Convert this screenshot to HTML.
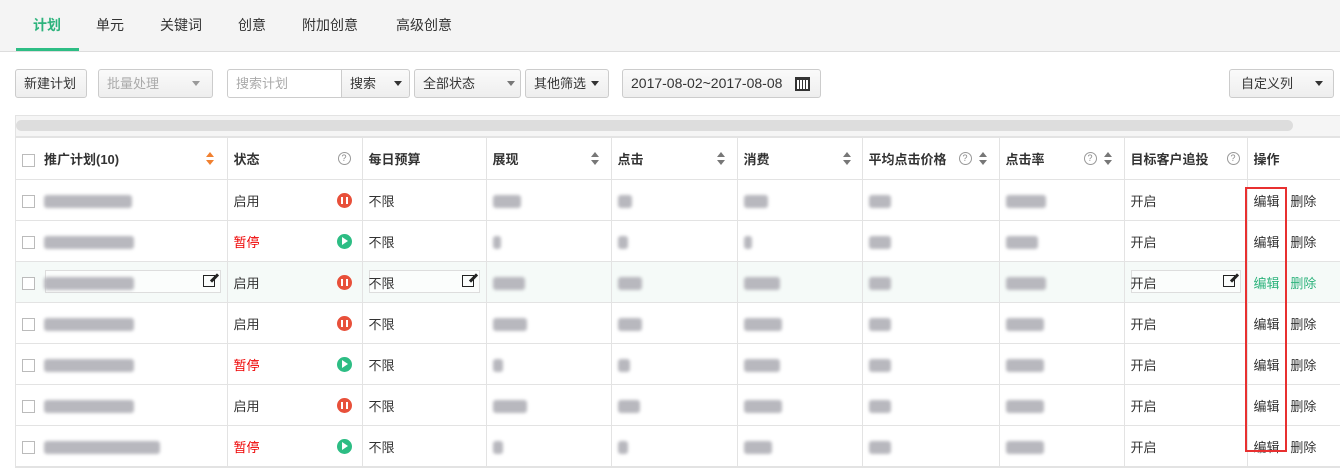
<!DOCTYPE html>
<html><head><meta charset="utf-8"><style>
*{box-sizing:border-box;margin:0;padding:0}
body{width:1340px;height:459px;overflow:hidden;background:#fff;font-family:"Liberation Sans","Noto Sans CJK SC",sans-serif;font-size:13px;color:#333;position:relative}
.tabs{position:absolute;left:0;top:0;width:1340px;height:52px;background:#f4f4f4;border-bottom:1px solid #ddd}
.tab{position:absolute;top:15px;font-size:14px;color:#333}
.tab.on{color:#2db37c;font-weight:bold}
.ul{position:absolute;left:16px;top:48px;width:63px;height:3px;background:#2dbd84}
.btn{position:absolute;top:69px;height:29px;border:1px solid #ccc;border-radius:3px;background:linear-gradient(#fafafa,#eee);font-size:13px;line-height:27px;padding-left:8px;color:#333}
.tri{position:absolute;top:11px;width:0;height:0;border-left:4px solid transparent;border-right:4px solid transparent;border-top:5px solid #333}
.tbl{position:absolute;left:15px;top:115px;width:1325px;border:1px solid #e3e3e3;border-right:none}
.scroll{height:21px;background:#f5f5f5;padding:4px 0 0 0;border-bottom:1px solid #e3e3e3}
.scroll div{height:11px;width:1277px;background:#ddd;border-radius:6px}
table{border-collapse:collapse;table-layout:fixed;width:1324px}
td,th{border:1px solid #e3e3e3;height:41px;padding:0 6px;text-align:left;position:relative;font-size:13px}
th{height:42px;font-weight:bold;background:#fff}
tr td:first-child,tr th:first-child{border-left:none}
.cb{display:inline-block;width:13px;height:13px;border:1px solid #bbb;vertical-align:middle;margin-right:9px;background:#fff}
.q{position:absolute;top:14px;width:13px;height:13px;border:1px solid #999;border-radius:50%;font-size:9px;line-height:11px;text-align:center;color:#888;font-weight:normal}
.s{position:absolute;top:14px;width:8px;height:14px}
.s:before{content:"";position:absolute;top:0;left:0;border-left:4px solid transparent;border-right:4px solid transparent;border-bottom:5px solid #777}
.s:after{content:"";position:absolute;top:8px;left:0;border-left:4px solid transparent;border-right:4px solid transparent;border-top:5px solid #777}
.s.o:before{border-bottom-color:#f08030}.s.o:after{border-top-color:#f08030}
.b{display:inline-block;height:13px;background:#b8b8be;filter:blur(1.5px);vertical-align:middle;border-radius:3px}
.ic{position:absolute;right:10px;top:13px;width:15px;height:15px;border-radius:50%}
.pa{background:#e8503a}.pa:before,.pa:after{content:"";position:absolute;top:4px;width:2px;height:7px;background:#fff}.pa:before{left:4px}.pa:after{left:9px}
.pl{background:#2dbd84}.pl:before{content:"";position:absolute;left:5px;top:3px;border-top:4.5px solid transparent;border-bottom:4.5px solid transparent;border-left:6px solid #fff}
.red{color:#e00}
.hl td{background:#f5faf8}
.ed{position:absolute;left:6px;right:6px;top:8px;height:23px;border:1px solid #ddd;background:#fbfdfc}
.pen{position:absolute;right:5px;top:4px;width:12px;height:12px;border:1.5px solid #222}
.pen:after{content:"";position:absolute;right:-2px;top:-3px;width:3px;height:10px;background:#222;transform:rotate(45deg)}
.rb{position:absolute;left:1245px;top:187px;width:42px;height:265px;border:2px solid #e83030}
</style></head><body>
<div class="tabs">
<span class="tab on" style="left:33px">计划</span>
<span class="tab" style="left:96px">单元</span>
<span class="tab" style="left:160px">关键词</span>
<span class="tab" style="left:238px">创意</span>
<span class="tab" style="left:302px">附加创意</span>
<span class="tab" style="left:396px">高级创意</span>
<div class="ul"></div>
</div>
<div class="btn" style="left:15px;width:72px">新建计划</div>
<div class="btn" style="left:98px;width:115px;color:#aaa">批量处理<span class="tri" style="left:93px;border-top-color:#999"></span></div>
<div class="btn" style="left:227px;width:115px;background:#fff;color:#aaa;border-radius:3px 0 0 3px">搜索计划</div>
<div class="btn" style="left:341px;width:69px;border-radius:0 3px 3px 0">搜索<span class="tri" style="left:52px"></span></div>
<div class="btn" style="left:414px;width:107px">全部状态<span class="tri" style="left:92px;border-top-color:#777"></span></div>
<div class="btn" style="left:525px;width:84px">其他筛选<span class="tri" style="left:65px"></span></div>
<div class="btn" style="left:622px;width:199px;font-size:14px">2017-08-02~2017-08-08<span style="position:absolute;left:172px;top:7px;width:15px;height:14px;border:2px solid #333;border-top-width:3px;background:repeating-linear-gradient(90deg,#fff 0 2px,#333 2px 3px)"></span></div>
<div class="btn" style="left:1229px;width:105px;padding-left:11px">自定义列<span class="tri" style="left:85px"></span></div>

<div class="tbl">
<div class="scroll"><div></div></div>
<table>
<colgroup><col style="width:211px"><col style="width:135px"><col style="width:124px"><col style="width:125px"><col style="width:126px"><col style="width:125px"><col style="width:137px"><col style="width:125px"><col style="width:123px"><col style="width:93px"></colgroup>
<tr><th><span class="cb"></span>推广计划(10)<span class="s o" style="left:190px"></span></th><th>状态<span class="q" style="left:110px">?</span></th><th>每日预算</th><th>展现<span class="s" style="left:104px"></span></th><th>点击<span class="s" style="left:105px"></span></th><th>消费<span class="s" style="left:105px"></span></th><th>平均点击价格<span class="q" style="left:96px">?</span><span class="s" style="left:116px"></span></th><th>点击率<span class="q" style="left:84px">?</span><span class="s" style="left:104px"></span></th><th>目标客户追投<span class="q" style="left:102px">?</span></th><th>操作</th></tr>
<tr><td><span class="cb"></span><span class="b" style="width:88px"></span></td><td>启用<span class="ic pa"></span></td><td>不限</td><td><span class="b" style="width:28px"></span></td><td><span class="b" style="width:14px"></span></td><td><span class="b" style="width:24px"></span></td><td><span class="b" style="width:22px"></span></td><td><span class="b" style="width:40px"></span></td><td>开启</td><td>编辑 &nbsp; 删除</td></tr>
<tr><td><span class="cb"></span><span class="b" style="width:90px"></span></td><td class="red">暂停<span class="ic pl"></span></td><td>不限</td><td><span class="b" style="width:8px"></span></td><td><span class="b" style="width:10px"></span></td><td><span class="b" style="width:8px"></span></td><td><span class="b" style="width:22px"></span></td><td><span class="b" style="width:32px"></span></td><td>开启</td><td>编辑 &nbsp; 删除</td></tr>
<tr class="hl"><td><span class="cb"></span><div class="ed" style="left:29px"><span class="pen"></span></div><span class="b" style="width:90px;position:relative"></span></td><td>启用<span class="ic pa"></span></td><td><div class="ed"><span class="pen"></span></div><span style="position:relative">不限</span></td><td><span class="b" style="width:32px"></span></td><td><span class="b" style="width:24px"></span></td><td><span class="b" style="width:36px"></span></td><td><span class="b" style="width:22px"></span></td><td><span class="b" style="width:40px"></span></td><td><div class="ed"><span class="pen"></span></div><span style="position:relative">开启</span></td><td style="color:#2db37c">编辑 &nbsp; 删除</td></tr>
<tr><td><span class="cb"></span><span class="b" style="width:90px"></span></td><td>启用<span class="ic pa"></span></td><td>不限</td><td><span class="b" style="width:34px"></span></td><td><span class="b" style="width:24px"></span></td><td><span class="b" style="width:38px"></span></td><td><span class="b" style="width:22px"></span></td><td><span class="b" style="width:38px"></span></td><td>开启</td><td>编辑 &nbsp; 删除</td></tr>
<tr><td><span class="cb"></span><span class="b" style="width:90px"></span></td><td class="red">暂停<span class="ic pl"></span></td><td>不限</td><td><span class="b" style="width:10px"></span></td><td><span class="b" style="width:12px"></span></td><td><span class="b" style="width:36px"></span></td><td><span class="b" style="width:22px"></span></td><td><span class="b" style="width:38px"></span></td><td>开启</td><td>编辑 &nbsp; 删除</td></tr>
<tr><td><span class="cb"></span><span class="b" style="width:90px"></span></td><td>启用<span class="ic pa"></span></td><td>不限</td><td><span class="b" style="width:34px"></span></td><td><span class="b" style="width:22px"></span></td><td><span class="b" style="width:38px"></span></td><td><span class="b" style="width:22px"></span></td><td><span class="b" style="width:38px"></span></td><td>开启</td><td>编辑 &nbsp; 删除</td></tr>
<tr><td><span class="cb"></span><span class="b" style="width:116px"></span></td><td class="red">暂停<span class="ic pl"></span></td><td>不限</td><td><span class="b" style="width:10px"></span></td><td><span class="b" style="width:10px"></span></td><td><span class="b" style="width:28px"></span></td><td><span class="b" style="width:22px"></span></td><td><span class="b" style="width:38px"></span></td><td>开启</td><td>编辑 &nbsp; 删除</td></tr>
</table>
</div>
<div class="rb"></div>
</body></html>
